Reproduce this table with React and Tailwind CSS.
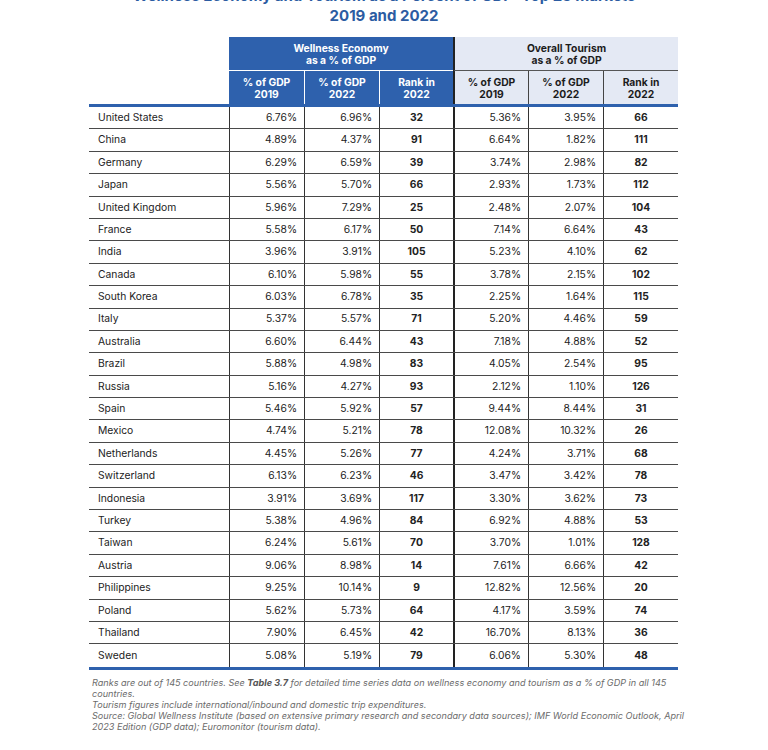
import React from "react";

const rows = [
  ["United States", "6.76%", "6.96%", "32", "5.36%", "3.95%", "66"],
  ["China", "4.89%", "4.37%", "91", "6.64%", "1.82%", "111"],
  ["Germany", "6.29%", "6.59%", "39", "3.74%", "2.98%", "82"],
  ["Japan", "5.56%", "5.70%", "66", "2.93%", "1.73%", "112"],
  ["United Kingdom", "5.96%", "7.29%", "25", "2.48%", "2.07%", "104"],
  ["France", "5.58%", "6.17%", "50", "7.14%", "6.64%", "43"],
  ["India", "3.96%", "3.91%", "105", "5.23%", "4.10%", "62"],
  ["Canada", "6.10%", "5.98%", "55", "3.78%", "2.15%", "102"],
  ["South Korea", "6.03%", "6.78%", "35", "2.25%", "1.64%", "115"],
  ["Italy", "5.37%", "5.57%", "71", "5.20%", "4.46%", "59"],
  ["Australia", "6.60%", "6.44%", "43", "7.18%", "4.88%", "52"],
  ["Brazil", "5.88%", "4.98%", "83", "4.05%", "2.54%", "95"],
  ["Russia", "5.16%", "4.27%", "93", "2.12%", "1.10%", "126"],
  ["Spain", "5.46%", "5.92%", "57", "9.44%", "8.44%", "31"],
  ["Mexico", "4.74%", "5.21%", "78", "12.08%", "10.32%", "26"],
  ["Netherlands", "4.45%", "5.26%", "77", "4.24%", "3.71%", "68"],
  ["Switzerland", "6.13%", "6.23%", "46", "3.47%", "3.42%", "78"],
  ["Indonesia", "3.91%", "3.69%", "117", "3.30%", "3.62%", "73"],
  ["Turkey", "5.38%", "4.96%", "84", "6.92%", "4.88%", "53"],
  ["Taiwan", "6.24%", "5.61%", "70", "3.70%", "1.01%", "128"],
  ["Austria", "9.06%", "8.98%", "14", "7.61%", "6.66%", "42"],
  ["Philippines", "9.25%", "10.14%", "9", "12.82%", "12.56%", "20"],
  ["Poland", "5.62%", "5.73%", "64", "4.17%", "3.59%", "74"],
  ["Thailand", "7.90%", "6.45%", "42", "16.70%", "8.13%", "36"],
  ["Sweden", "5.08%", "5.19%", "79", "6.06%", "5.30%", "48"],
];

const cols = "grid grid-cols-[140px_75px_75px_74px_75px_75px_75px]";

function SubHead({ top, bottom, cls }) {
  return (
    <div className={"flex flex-col items-center justify-center text-center leading-[12px] " + cls}>
      <span>{top}</span>
      <span>{bottom}</span>
    </div>
  );
}

export default function App() {
  return (
    <div
      className="w-[768px] h-[750px] overflow-hidden bg-white"
      style={{ fontFamily: "Inter, 'Noto Sans', sans-serif" }}
    >
      <div className="-mt-[14px] text-center text-[15px] font-bold leading-[20px] text-[#2c5ca2]">
        <div>Wellness Economy and Tourism as a Percent of GDP: Top 25 Markets</div>
        <div>2019 and 2022</div>
      </div>

      <div className="ml-[89px] mt-[11px] w-[589px]">
        {/* Header */}
        <div className={cols + " border-b-[3px] border-[#2e61ad] text-[10.3px] font-bold"}>
          <div className="row-span-2" />
          <div className="col-span-3 flex h-[34px] flex-col items-center justify-center border-b border-white bg-[#2e61ad] leading-[12px] text-white">
            <span>Wellness Economy</span>
            <span>as a % of GDP</span>
          </div>
          <div className="col-span-3 flex h-[34px] flex-col items-center justify-center border-b border-l-2 border-b-[#555] border-l-[#222] bg-[#e4e9f4] leading-[12px] text-[#1c1c1c]">
            <span>Overall Tourism</span>
            <span>as a % of GDP</span>
          </div>
          <SubHead top="% of GDP" bottom="2019" cls="h-[33px] bg-[#2e61ad] text-white" />
          <SubHead top="% of GDP" bottom="2022" cls="h-[33px] bg-[#2e61ad] text-white border-l border-white" />
          <SubHead top="Rank in" bottom="2022" cls="h-[33px] bg-[#2e61ad] text-white border-l border-white" />
          <SubHead top="% of GDP" bottom="2019" cls="h-[33px] bg-[#e4e9f4] text-[#1c1c1c] border-l-2 border-[#222]" />
          <SubHead top="% of GDP" bottom="2022" cls="h-[33px] bg-[#e4e9f4] text-[#1c1c1c] border-l border-[#444]" />
          <SubHead top="Rank in" bottom="2022" cls="h-[33px] bg-[#e4e9f4] text-[#1c1c1c] border-l border-[#444]" />
        </div>

        {/* Body */}
        {rows.map((r, i) => {
          const last = i === rows.length - 1;
          return (
            <div
              key={r[0]}
              className={
                cols +
                " text-[10.3px] text-[#222] " +
                (last
                  ? "h-[25.4px] border-b-[3px] border-[#2e61ad]"
                  : "h-[22.4px] border-b border-[#4a4a4a]")
              }
            >
              <div className="flex items-center pl-[9px]">{r[0]}</div>
              <div className="flex items-center justify-end border-l border-[#333] pr-[7px]">{r[1]}</div>
              <div className="flex items-center justify-end border-l border-[#333] pr-[7px]">{r[2]}</div>
              <div className="flex items-center justify-center border-l border-[#333] font-bold">{r[3]}</div>
              <div className="flex items-center justify-end border-l-2 border-[#222] pr-[7px]">{r[4]}</div>
              <div className="flex items-center justify-end border-l border-[#333] pr-[7px]">{r[5]}</div>
              <div className="flex items-center justify-center border-l border-[#333] font-bold">{r[6]}</div>
            </div>
          );
        })}

        {/* Footnotes */}
        <div className="mt-[7px] pl-[3px] text-[9.1px] italic leading-[11px] text-[#6b6b6b]">
          <div className="whitespace-nowrap">
            Ranks are out of 145 countries. See <span className="font-bold text-[#555]">Table 3.7</span> for detailed time series data on wellness economy and tourism as a % of GDP in all 145
          </div>
          <div className="whitespace-nowrap">countries.</div>
          <div className="whitespace-nowrap">Tourism figures include international/inbound and domestic trip expenditures.</div>
          <div className="whitespace-nowrap">
            Source: Global Wellness Institute (based on extensive primary research and secondary data sources); IMF World Economic Outlook, April
          </div>
          <div className="whitespace-nowrap">2023 Edition (GDP data); Euromonitor (tourism data).</div>
        </div>
      </div>
    </div>
  );
}
